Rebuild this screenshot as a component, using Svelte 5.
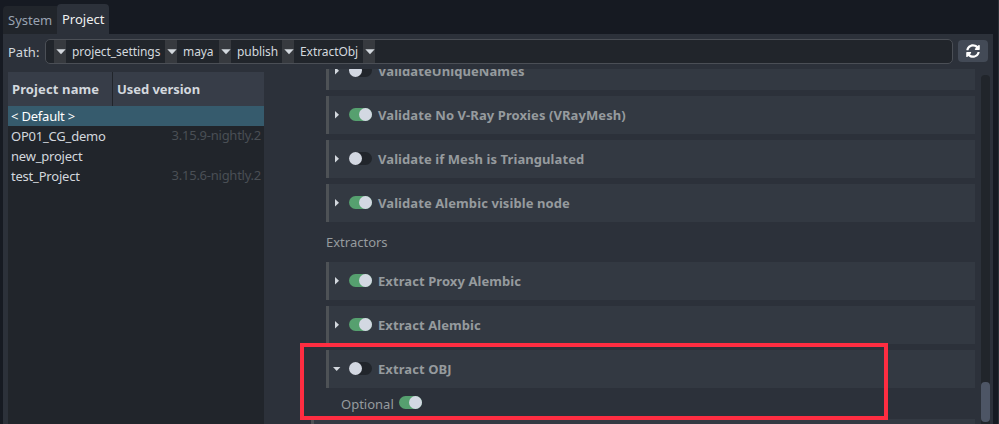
<script>
  const crumbs = [
    { label: 'project_settings', width: 99 },
    { label: 'maya', width: 42 },
    { label: 'publish', width: 51 },
    { label: 'ExtractObj', width: 69 }
  ];
  const projects = [
    { name: '< Default >', version: '', selected: true },
    { name: 'OP01_CG_demo', version: '3.15.9-nightly.2' },
    { name: 'new_project', version: '' },
    { name: 'test_Project', version: '3.15.6-nightly.2' }
  ];
  const validators = [
    { label: 'ValidateUniqueNames', on: false },
    { label: 'Validate No V-Ray Proxies (VRayMesh)', on: true },
    { label: 'Validate if Mesh is Triangulated', on: false },
    { label: 'Validate Alembic visible node', on: true }
  ];
  const extractors = [
    { label: 'Extract Proxy Alembic', on: true },
    { label: 'Extract Alembic', on: true },
    { label: 'Extract OBJ', on: false, open: true }
  ];
</script>

{#snippet dropdown()}
  <span class="drop"><svg width="10" height="6" viewBox="0 0 10 6"><path d="M.3 .3h9.4L5 5.3z" fill="#d3d8de" /></svg></span>
{/snippet}

{#snippet toggle(on)}
  <span class="toggle" class:on><i></i></span>
{/snippet}

{#snippet card(item)}
  <div class="card">
    <span class="arrow">
      {#if item.open}
        <svg width="8" height="8" viewBox="0 0 8 8"><path d="M0 2h7.400L3.700 6z" fill="#d3d8de" /></svg>
      {:else}
        <svg width="8" height="8" viewBox="0 0 8 8"><path d="M2 0v7.400L6 3.700z" fill="#d3d8de" /></svg>
      {/if}
    </span>
    {@render toggle(item.on)}
    <b>{item.label}</b>
  </div>
{/snippet}

<div class="window">
  <nav class="tabs">
    <span class="tab">System</span>
    <span class="tab active">Project</span>
  </nav>
  <main>
    <div class="path">
      <span class="path-label">Path:</span>
      <div class="field">
        {@render dropdown()}
        {#each crumbs as c}
          <span class="crumb" style:width="{c.width}px">{c.label}</span>
          {@render dropdown()}
        {/each}
      </div>
      <button aria-label="Refresh">
        <svg width="14" height="14" viewBox="0 0 512 512"><path fill="#fff" d="M370.7 133.3C339.5 104 298.9 88 255.8 88c-77.500.1-144.300 53.200-162.800 126.900-1.300 5.400-6.100 9.200-11.700 9.200H24.100c-7.500 0-13.200-6.800-11.800-14.200C33.900 94.900 134.800 8 256 8c66.400 0 126.800 26.100 171.300 68.700L463 41c15.100-15.100 41-4.400 41 17v134c0 13.300-10.700 24-24 24H346c-21.400 0-32.100-25.900-17-41zM32 296h134c21.400 0 32.100 25.900 17 41l-41.800 41.800c31.300 29.300 71.800 45.300 114.900 45.200 77.400-.1 144.300-53.100 162.800-126.800 1.300-5.400 6.100-9.200 11.700-9.200h57.300c7.500 0 13.200 6.800 11.800 14.200C478.100 417.100 377.200 504 256 504c-66.400 0-126.800-26.100-171.300-68.700L49 471c-15.100 15.100-41 4.400-41-17V320c0-13.300 10.700-24 24-24z" /></svg>
      </button>
    </div>
    <div class="body">
      <section class="table">
        <div class="head"><b class="name-col">Project name</b><b class="version-col">Used version</b></div>
        {#each projects as p}
          <div class="row" class:selected={p.selected}>
            <span>{p.name}</span><span class="version">{p.version}</span>
          </div>
        {/each}
      </section>
      <section class="settings">
        <div class="group first">
          {#each validators as item}{@render card(item)}{/each}
        </div>
        <div class="heading">Extractors</div>
        <div class="group">
          {#each extractors as item}{@render card(item)}{/each}
        </div>
        <div class="option"><span>Optional</span>{@render toggle(true)}</div>
        <div class="next"></div>
      </section>
      <div class="scroll"><div class="thumb"></div></div>
    </div>
  </main>
  <div class="highlight"></div>
</div>

<style>
  :global(body) { background: #161a22; }
  * { box-sizing: border-box; }
  .window {
    position: relative;
    width: 999px;
    height: 424px;
    overflow: hidden;
    background: #161a22;
    border-right: 1px solid #2b3037;
    color: #d3d8de;
    font: 13px/20px "Noto Sans", sans-serif;
    white-space: nowrap;
  }
  .tabs { display: flex; align-items: flex-end; height: 34px; padding-left: 3px; }
  .tab { width: 54px; height: 28px; padding: 4px 0 0 5px; background: #21252b; color: #99a3b2; border-radius: 4px 0 0 0; }
  .tab.active { width: 52px; height: 30px; padding-top: 5px; background: #2c313a; color: #f0f0f0; border-radius: 4px 4px 0 0; }
  main { display: flex; flex-direction: column; width: 990px; height: 390px; margin-left: 3px; padding: 5px 0 0 5px; background: #2c313a; }
  .path { display: flex; height: 25px; align-items: center; flex: none; }
  .path-label { width: 37px; }
  .field { display: flex; width: 908px; height: 25px; padding-left: 8px; background: #21252b; border: 1px solid #4b4f56; border-radius: 5px; font-size: 12px; line-height: 23px; letter-spacing: -0.07px; }
  .drop { display: flex; width: 12px; height: 23px; align-items: center; justify-content: center; background: #373a3f; }
  .drop svg { flex: none; margin: 1px 0 0 1px; }
  .crumb { padding-left: 6px; }
  button { display: grid; place-items: center; width: 30px; height: 22px; margin: -1px 0 0 5px; padding: 0; border: 0; border-radius: 4px; background: #434a56; }
  .body { display: flex; flex: 1; min-height: 0; padding-top: 5px; }
  .table { width: 256px; margin-top: 3px; background: #21252b; }
  .head { display: flex; height: 34px; line-height: 35px; background: #373d48; }
  .name-col { width: 105px; padding-left: 4px; border-right: 1px solid #21252b; letter-spacing: 0.12px; }
  .version-col { padding-left: 4px; letter-spacing: -0.05px; }
  .row { display: flex; justify-content: space-between; height: 20px; padding: 0 3px; line-height: 21px; letter-spacing: -0.21px; }
  .selected { background: #365b6d; color: #fff; }
  .version { color: #4a4f55; line-height: 19px; letter-spacing: -0.25px; }
  .settings { width: 711px; overflow: hidden; padding-left: 47px; color: #969b9e; }
  .group { display: flex; flex-direction: column; gap: 6px; padding-left: 15px; }
  .first { margin-top: -17px; }
  .card { display: flex; align-items: center; height: 38px; background: #333942; border-left: 3px solid #4e5256; }
  .arrow { display: flex; width: 20px; padding-left: 4px; }
  .toggle { display: flex; width: 23px; height: 13px; border-radius: 7px; background: #21252b; }
  .toggle.on { justify-content: flex-end; background: #56a06f; }
  .toggle i { width: 13px; height: 13px; border-radius: 50%; background: #d3d8e2; }
  .card .toggle { margin-top: -1px; }
  .card b { margin: -1px 0 0 6px; letter-spacing: 0.08px; }
  .heading { height: 40px; padding-left: 15px; line-height: 41px; }
  .option { display: flex; height: 31px; padding: 5px 0 0 30px; }
  .option span:first-child { width: 58px; padding-top: 1px; }
  .option .toggle { margin-top: 3px; }
  .next { height: 20px; background: #333942; border-left: 3px solid #4e5256; }
  .scroll { display: flex; width: 9px; margin: 6px 0 0 6px; padding-top: 307px; border-radius: 4px 4px 0 0; background: #21252b; }
  .thumb { width: 9px; height: 40px; border-radius: 4px; background: #4d5565; }
  .highlight { position: absolute; left: 300px; top: 343px; width: 588px; height: 77px; border: 4px solid #ff2d41; }
</style>
